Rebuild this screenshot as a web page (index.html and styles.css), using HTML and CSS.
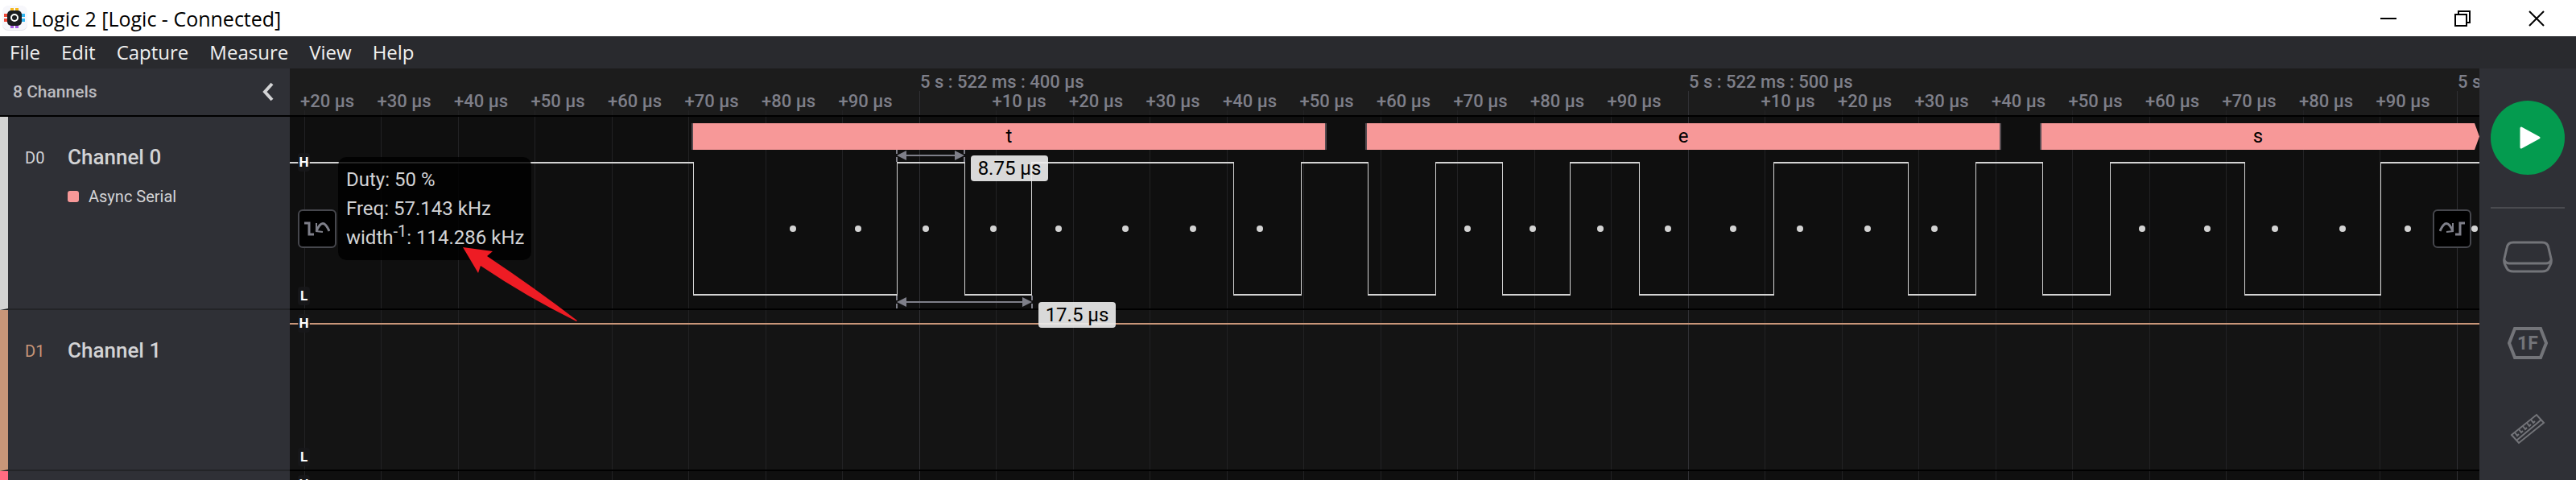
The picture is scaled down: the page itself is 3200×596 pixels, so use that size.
FILE: index.html
```html
<!DOCTYPE html>
<html lang="en">
<head>
<meta charset="utf-8">
<title>Logic 2 [Logic - Connected]</title>
<link rel="stylesheet" href="styles.css">
</head>
<body>
<header class="titlebar">
  <svg class="logo" viewBox="0 0 32 44" aria-hidden="true">
    <rect x="1" y="8" width="31" height="29" rx="7" fill="#e4e4ea"/>
    <rect x="1" y="6" width="31" height="30" rx="7" fill="#f7f7fb"/>
    <path d="M13 9v5M19 9v5" stroke="#f5b81c" stroke-width="4"/>
    <path d="M13 28v6M19 28v6" stroke="#a45be0" stroke-width="4"/>
    <path d="M3 18h6M3 24h6" stroke="#ee4b3a" stroke-width="4"/>
    <path d="M23 18h6M23 24h6" stroke="#33b5f0" stroke-width="4"/>
    <rect x="7" y="12" width="18" height="19" rx="5" fill="#1b1c20"/>
    <circle cx="16" cy="21" r="4" fill="none" stroke="#fff" stroke-width="2"/>
  </svg>
  <h1 class="title">Logic 2 [Logic - Connected]</h1>
  <div class="window-controls">
    <button class="win" aria-label="Minimize"><svg viewBox="0 0 22 22"><path d="M1 11h20"/></svg></button>
    <button class="win" aria-label="Restore"><svg viewBox="0 0 22 22"><path d="M2 6h14v14H2zM6 6V2h14v14h-4"/></svg></button>
    <button class="win" aria-label="Close"><svg viewBox="0 0 22 22"><path d="M2 2l18 18M20 2L2 20"/></svg></button>
  </div>
</header>
<nav class="menubar">
  <button>File</button><button>Edit</button><button>Capture</button><button>Measure</button><button>View</button><button>Help</button>
</nav>
<main class="workspace">
  <aside class="sidebar">
    <div class="side-head">
      <span>8 Channels</span>
      <button class="collapse" aria-label="Collapse"><svg viewBox="0 0 16 24"><path d="M13 2L4 12l9 10"/></svg></button>
    </div>
    <section class="channel channel-tall stripe-white">
      <span class="channel-id">D0</span>
      <div class="channel-info">
        <h2>Channel 0</h2>
        <p class="analyzer"><span class="swatch"></span>Async Serial</p>
      </div>
    </section>
    <section class="channel stripe-tan">
      <span class="channel-id">D1</span>
      <div class="channel-info"><h2>Channel 1</h2></div>
    </section>
    <section class="channel stripe-pink"></section>
  </aside>

  <div class="plot">
    <div class="ruler">
      <div class="majors"><span></span><span>5 s : 522 ms : 400 µs</span><span>5 s : 522 ms : 500 µs</span><span>5 s : 522 ms : 600 µs</span></div>
      <div class="minors" id="minors"></div>
    </div>
    <div class="lane lane-tall">
      <div class="frames">
        <span class="frame">t</span><span class="frame">e</span><span class="frame-open">s</span>
      </div>
    </div>
    <div class="lane lane-alt"></div>
    <div class="lane"></div>

    <svg class="traces" width="2720" height="511" aria-hidden="true">
      <g id="grid"></g>
      <path class="edge" d="M501.500 117V281M754.500 117V281M838.500 117V281M921.500 117V281M1172.500 117V281M1256.500 117V281M1339.500 117V281M1423.500 117V281M1506.500 117V281M1590.500 117V281M1676.500 117V281M1843.500 117V281M2010.500 117V281M2094.500 117V281M2177.500 117V281M2261.500 117V281M2428.500 117V281M2597.500 117V281"/>
      <path class="level" d="M0 117H502M754 117H839M921 117H1173M1256 117H1340M1423 117H1507M1590 117H1677M1843 117H2011M2094 117H2178M2261 117H2429M2597 117H2720"/>
      <path class="level" d="M501 281H755M838 281H922M1172 281H1257M1339 281H1424M1506 281H1591M1676 281H1844M2010 281H2095M2177 281H2262M2428 281H2598"/>
      <path class="level level-tan" d="M0 317H2720"/>
      <g id="dots"></g>
      <g class="measure">
        <path d="M754 100v6M754 110v6M838 100v6M838 110v6M758 108h76M754 282v6M754 292v6M922 282v6M922 292v6M758 290h160"/>
        <path class="tip" d="M754 108l12-6v12zM838 108l-12-6v12zM754 290l12-6v12zM922 290l-12-6v12z"/>
      </g>
    </svg>

    <span class="level-tag tag-h0">H</span><span class="level-tag tag-l0">L</span>
    <span class="level-tag tag-h1">H</span><span class="level-tag tag-l1">L</span>
    <span class="level-tag tag-h2">H</span>
    <output class="pill pill-width">8.75 µs</output>
    <output class="pill pill-period">17.5 µs</output>
    <button class="jump jump-prev" aria-label="Previous edge"><svg viewBox="0 0 32 20"><path d="M0 3h6v14h6"/><path d="M15 13q8-19 16 0"/><path class="thin" d="M15 3v10l8 1"/></svg></button>
    <button class="jump jump-next" aria-label="Next edge"><svg viewBox="0 0 32 20"><path d="M32 3h-6v14h-6"/><path d="M17 13q-8-19-16 0"/><path class="thin" d="M17 3v10l-8 1"/></svg></button>
    <div class="tooltip">
      <p>Duty: 50 %</p><p>Freq: 57.143 kHz</p><p>width<sup>-1</sup>: 114.286 kHz</p>
    </div>
    <svg class="callout" viewBox="0 0 144 94" aria-hidden="true"><path d="M0 0L37 5L30 11Q90 51 142 91L141 92Q80 62 22 23L19 32z"/></svg>
  </div>

  <aside class="tools">
    <button class="play" aria-label="Start capture"><svg viewBox="0 0 28 30"><path d="M3 3L25 15L3 27z"/></svg></button>
    <hr>
    <button class="tool" aria-label="Device"><svg class="mid" width="62" height="42" viewBox="0 0 62 42"><path d="M13 3h36q7 0 8 7l3 13q1 4-1 8l-2 4q-2 4-8 4H13q-6 0-8-4l-2-4q-2-4-1-8L5 10q1-7 8-7zM2 25q2 4 6 4h46q4 0 6-4"/></svg></button>
    <button class="tool" aria-label="Analyzers"><svg width="50" height="42" viewBox="0 0 50 42"><path class="bold" d="M9 3h32l7 18-7 18H9L2 21z"/><text x="25" y="29">1F</text></svg></button>
    <button class="tool" aria-label="Measurements"><svg width="44" height="42" viewBox="0 0 44 42"><path d="M2 28L33 3l9 10L11 38zM8 35L39 9M6 25l3 4 2-2M11 21l3 4 2-2M16 17l3 4 2-2M21 13l3 4 2-2M26 9l3 4 2-2"/></svg></button>
  </aside>
</main>
<script src="script.js"></script>
</body>
</html>
```
FILE: styles.css
```css
* { box-sizing: border-box; margin: 0; }
html, body { height: 100%; }
body {
  display: flex; flex-direction: column; overflow: hidden;
  background: #2f3036; color: #d3d3d5;
  font-family: Roboto, "Liberation Sans", sans-serif; font-size: 20px;
}
button { border: 0; padding: 0; background: none; color: inherit; font: inherit; }
svg { display: block; fill: none; }

.titlebar { display: flex; align-items: center; height: 45px; background: #fff; color: #000; padding: 0 3px 0 2px; flex: none; }
.logo { width: 32px; height: 44px; }
.title { flex: 1; margin-left: 5px; font: 400 25px/44px "Noto Sans", "Open Sans", sans-serif; font-family: "Open Sans", sans-serif; }
.window-controls { display: flex; }
.win { width: 92px; height: 44px; display: grid; place-items: center; }
.win svg { width: 22px; height: 22px; stroke: #000; stroke-width: 2; }

.menubar { display: flex; align-items: center; gap: 26px; height: 40px; padding-left: 12px; background: #292a2e; color: #f0f0f0; font: 24px/40px "Open Sans", sans-serif; flex: none; }
.workspace { display: flex; flex: 1; min-height: 0; }

.sidebar { width: 360px; flex: none; overflow: hidden; }
.side-head { display: flex; justify-content: space-between; align-items: center; height: 60px; padding: 0 19px 0 16px; border-bottom: 2px solid #000; font-size: 21px; font-weight: 500; color: #bcbcc0; }
.collapse svg { width: 16px; height: 24px; stroke: #d3d3d5; stroke-width: 4; }
.channel { display: flex; height: 200px; padding: 34px 0 0 21px; border-left: 10px solid; border-bottom: 2px solid #232427; }
.channel-tall { height: 240px; }
.stripe-white { border-left-color: #d3d3d3; }
.stripe-tan { border-left-color: #c89679; }
.stripe-pink { border-left-color: #ff6b81; }
.channel-id { width: 53px; line-height: 35px; }
.stripe-tan .channel-id { color: #c89679; }
.channel h2 { font-size: 26px; font-weight: 500; line-height: 32px; }
.analyzer { display: flex; align-items: center; gap: 12px; margin-top: 21px; line-height: 24px; }
.swatch { width: 14px; height: 14px; border-radius: 3px; background: #f79898; }

.plot { position: relative; flex: 1; min-width: 0; overflow: hidden; background: #0f0f0f; }
.ruler { height: 60px; padding-top: 5px; background: #1c1c1c; border-bottom: 2px solid #000; color: #7e7f89; font-size: 22px; font-weight: 500; line-height: 24px; white-space: nowrap; }
.majors { display: grid; grid-template-columns: 783px 955px 955px 955px; height: 24px; }
.minors { display: grid; grid-template-columns: repeat(30, 1fr); width: 2865px; margin-left: 13px; }
.lane { height: 200px; border-bottom: 2px solid #000; }
.lane-tall { height: 240px; padding-top: 8px; }
.lane-alt { background: #141414; }
.frames { position: relative; z-index: 1; display: grid; grid-template-columns: 789px 790px 1fr; column-gap: 48px; height: 32px; margin-left: 499px; color: #000; font-size: 24px; line-height: 33px; text-align: center; }
.frame { background: #f79898; border: solid #554b50; border-width: 0 2px; }
.frame-open { padding-right: 6px; background: #f79898; border-left: 2px solid #554b50; clip-path: polygon(0 0, calc(100% - 6px) 0, 100% 50%, calc(100% - 6px) 100%, 0 100%); }

.traces { position: absolute; left: 0; top: 0; }
.grid-minor { fill: #222224; }
.grid-major { fill: #303034; }
.edge { stroke: #d3d3d3; stroke-width: 1; }
.level { stroke: #d3d3d3; stroke-width: 2; }
.level-tan { stroke: #c89679; }
.dot { fill: #d3d3d3; }
.measure { stroke: #7e7f89; stroke-width: 2; }
.tip { fill: #7e7f89; stroke: none; }

.level-tag { position: absolute; left: 10px; width: 15px; height: 23px; border-radius: 4px; background: #18181acc; color: #fff; font-size: 17px; font-weight: 700; line-height: 23px; text-align: center; }
.tag-h0 { top: 105px; }
.tag-l0 { top: 271px; }
.tag-h1 { top: 305px; }
.tag-l1 { top: 471px; }
.tag-h2 { top: 505px; }
.pill { position: absolute; width: 96px; height: 32px; border-radius: 4px; background: #ededede8; color: #000; font-size: 24px; line-height: 32px; text-align: center; white-space: nowrap; }
.pill-width { left: 846px; top: 108px; }
.pill-period { left: 930px; top: 290px; }
.jump { position: absolute; top: 175px; width: 48px; height: 48px; display: grid; place-items: center; background: #000; border: 2px solid #46474d; border-radius: 6px; }
.jump svg { width: 32px; height: 20px; stroke: #7e7f89; stroke-width: 3; }
.jump .thin { stroke-width: 2; }
.jump-prev { left: 10px; }
.jump-next { right: 10px; }
.tooltip { position: absolute; left: 60px; top: 110px; width: 240px; padding: 10px; border-radius: 10px; background: #000000d4; font-size: 24px; line-height: 36px; white-space: nowrap; }
.tooltip sup { font-size: 20px; line-height: 0; }
.callout { position: absolute; left: 215px; top: 222px; width: 144px; height: 94px; fill: #ee1c24; }

.tools { display: flex; flex-direction: column; align-items: center; width: 120px; flex: none; padding-top: 40px; }
.play { width: 92px; height: 92px; border-radius: 50%; background: #049b4f; display: grid; place-items: center; flex: none; }
.play svg { width: 28px; height: 30px; margin-left: 6px; fill: #fff; stroke: #fff; stroke-width: 3; stroke-linejoin: round; }
.tools hr { width: 92px; height: 2px; margin: 40px 0 39px; border: 0; background: #4a4b50; flex: none; }
.tool { height: 42px; margin-bottom: 65px; flex: none; }
.tool svg { stroke: #737479; stroke-width: 2; }
.tool .mid { stroke-width: 3; }
.tool .bold { stroke-width: 4; }
.tool text { fill: #737479; stroke: none; font-size: 23px; font-weight: 700; text-anchor: middle; }
```
FILE: script.js
```js
const NS = "http://www.w3.org/2000/svg";
const add = (parent, tag, attrs) => {
  const node = document.createElementNS(NS, tag);
  for (const key in attrs) node.setAttribute(key, attrs[key]);
  parent.appendChild(node);
};

const minors = document.getElementById("minors");
const grid = document.getElementById("grid");
for (let i = 0; i < 29; i++) {
  const step = (i + 2) % 10;
  const label = document.createElement("span");
  label.textContent = step ? `+${step}0 µs` : "";
  minors.appendChild(label);
  const top = step ? 52 : 28;
  const x = Math.floor(18 + i * 95.5);
  const cls = step ? "grid-minor" : "grid-major";
  add(grid, "rect", { class: cls, x, y: top, width: 1, height: 58 - top });
  add(grid, "rect", { class: cls, x, y: 60, width: 1, height: 238 });
  add(grid, "rect", { class: cls, x, y: 300, width: 1, height: 198 });
  add(grid, "rect", { class: cls, x, y: 500, width: 1, height: 11 });
}

const dots = document.getElementById("dots");
const samples = [625, 706, 790, 874, 955, 1038, 1122, 1205, 1463, 1544, 1628, 1712,
  1793, 1876, 1960, 2043, 2301, 2382, 2466, 2550, 2631, 2714];
for (const cx of samples) add(dots, "circle", { class: "dot", cx, cy: 199, r: 4 });
```
